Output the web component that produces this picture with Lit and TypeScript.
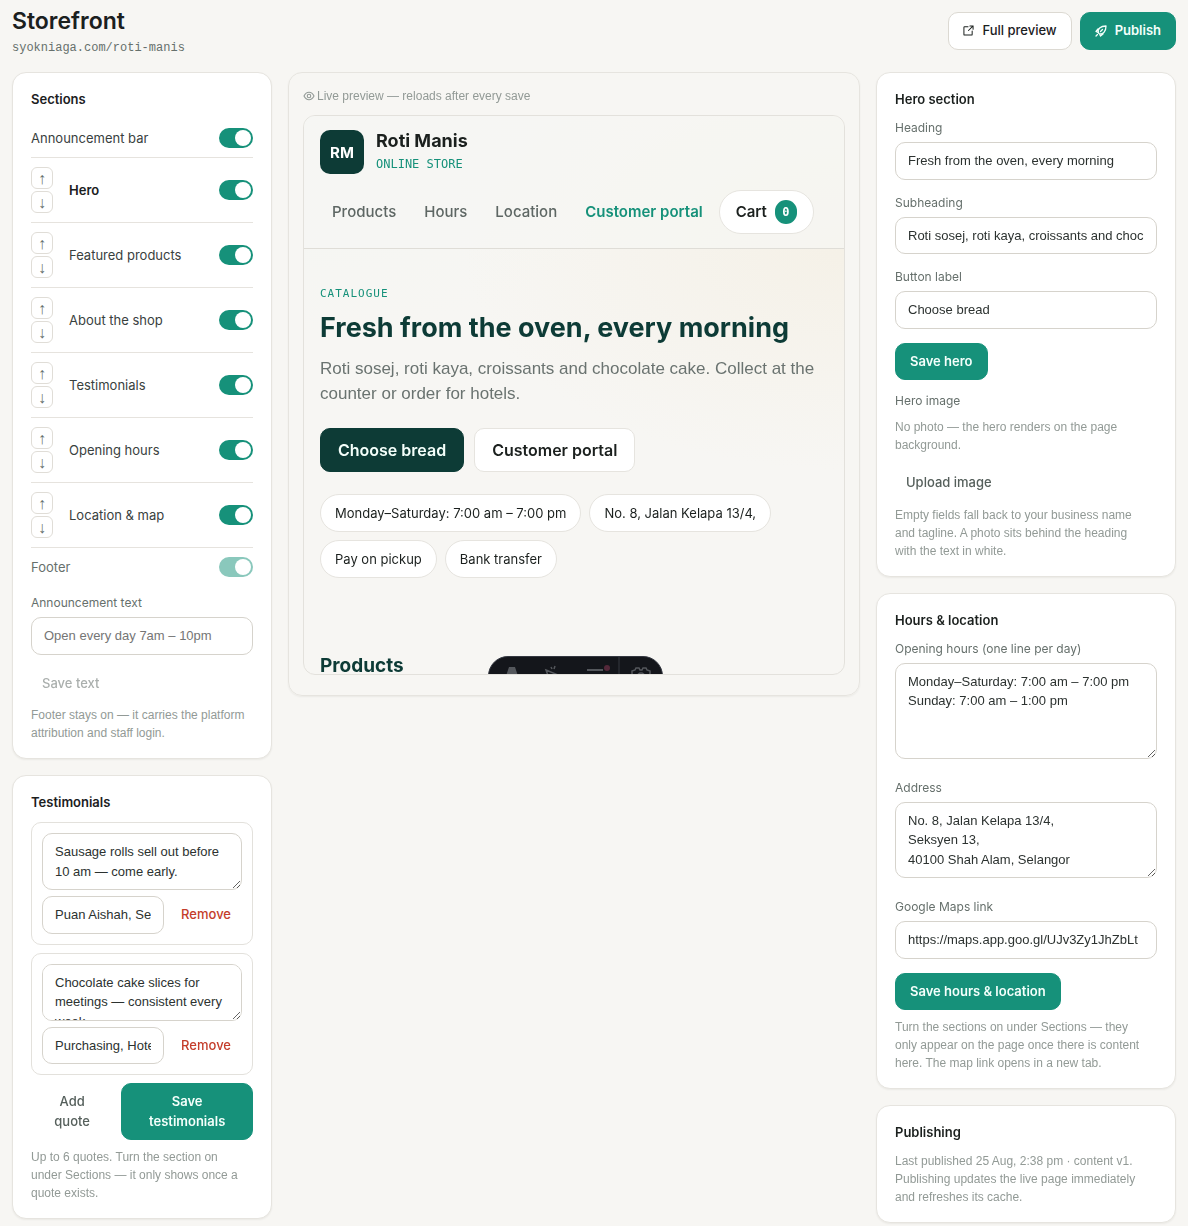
import { LitElement, html, css, svg, nothing } from "lit";
import { customElement, property, state } from "lit/decorators.js";
import { classMap } from "lit/directives/class-map.js";

const base = css`
  * { box-sizing: border-box; }
  h1, h2, h3, p { margin: 0; }
  button, input, textarea { font: inherit; }
`;

const controls = css`
  .card {
    background: #fff;
    border: 1px solid #e6e4df;
    border-radius: 14px;
    padding: 16px 18px;
    box-shadow: 0 1px 2px rgba(30, 30, 20, 0.06);
  }
  .title { font-size: 13px; line-height: 20px; font-weight: 600; color: #1b201e; margin-bottom: 10px; }
  .label { display: block; font-size: 12px; line-height: 18px; color: #66706c; margin-bottom: 5px; }
  .hint, .caption { font-family: "Liberation Sans", sans-serif; font-size: 12px; line-height: 18px; color: #929a96; }
  .hint { padding-right: 6px; }
  .field { margin-bottom: 14px; }
  .field.tall { margin-bottom: 20px; }
  .box {
    display: block;
    width: 100%;
    min-width: 0;
    padding: 8px 12px;
    border: 1px solid #d6d3cc;
    border-radius: 10px;
    background: #fff;
    color: #2c3230;
    font-family: "Liberation Sans", sans-serif;
    font-size: 13px;
    line-height: 1.5;
  }
  .box::placeholder { color: #757575; opacity: 1; }
  textarea.box { resize: vertical; }
  .btn {
    display: inline-flex;
    align-items: center;
    justify-content: center;
    gap: 8px;
    padding: 8px 14px;
    border: 1px solid transparent;
    border-radius: 10px;
    font-size: 13px;
    line-height: 1.5;
    font-weight: 500;
    background: none;
    color: #1b201e;
    cursor: pointer;
  }
  .primary { background: #16917a; border-color: #16917a; color: #f4fffb; font-weight: 600; }
  .outline { background: #fff; border-color: #dcd9d2; }
  .ghost { padding: 8px 10px; color: #56605c; }
  .danger { color: #c43d2b; }
  .ghost:disabled { opacity: 0.5; cursor: default; }
`;

const openIcon = svg`<svg width="11" height="11" viewBox="0 0 24 24" fill="none" stroke="currentColor" stroke-width="2.2" stroke-linecap="round" stroke-linejoin="round" aria-hidden="true"><path d="M15 2h7v7M22 2 12 12M11 4H3.500a1.500 1.500 0 0 0-1.500 1.500v15A1.500 1.500 0 0 0 3.500 22h15a1.500 1.500 0 0 0 1.500-1.500V13"/></svg>`;
const rocketIcon = svg`<svg width="12" height="12" viewBox="0 0 24 24" fill="none" stroke="currentColor" stroke-width="2.600" stroke-linecap="round" stroke-linejoin="round" aria-hidden="true"><path d="M7 16C4 8 11 2 22 2c0 11-6 18-14 15zM8 8H6l-4 5 4 2M16 16v2l-5 4-2-4M2 22l3-3"/><path d="M11 13l4-4"/></svg>`;
const eyeIcon = svg`<svg width="12" height="12" viewBox="0 0 24 24" fill="none" stroke="currentColor" stroke-width="2.2" stroke-linecap="round" stroke-linejoin="round" aria-hidden="true"><path d="M2 12c2.500-5 6-7.500 10-7.500S19.500 7 22 12c-2.500 5-6 7.500-10 7.500S4.500 17 2 12z"/><circle cx="12" cy="12" r="3.500"/></svg>`;

@customElement("section-row")
class SectionRow extends LitElement {
  static styles = [base, css`
    :host { display: block; }
    .row { display: flex; align-items: center; gap: 16px; padding: 9px 0; border-bottom: 1px solid #e6e3de; }
    .row.locked { border-bottom: 0; }
    .moves { display: grid; gap: 2px; }
    .move {
      width: 22px; height: 22px; padding: 0;
      border: 1px solid #e0ddd7; border-radius: 6px; background: #fff;
      color: #66706c; font-family: "Liberation Sans", sans-serif; font-size: 16px; line-height: 22px; cursor: pointer;
    }
    .name { flex: 1; font-size: 13px; line-height: 20px; color: #39413e; }
    .name.active { font-weight: 600; color: #1b201e; }
    .locked .name { color: #66706c; }
    .toggle {
      appearance: none; flex: none; display: flex; align-items: center;
      width: 34px; height: 20px; margin: 0; padding: 2px;
      border-radius: 10px; background: #c9cdca; cursor: pointer;
    }
    .toggle::before { content: ""; width: 16px; height: 16px; border-radius: 50%; background: #fff; }
    .toggle:checked { background: #16917a; justify-content: flex-end; }
    .toggle:disabled { opacity: 0.5; cursor: default; }
  `];
  @property() name = "";
  @property({ type: Boolean }) movable = false;
  @property({ type: Boolean }) active = false;
  @property({ type: Boolean }) locked = false;
  render() {
    return html`<div class=${classMap({ row: true, locked: this.locked })}>
      ${this.movable ? html`<div class="moves">
        <button class="move" aria-label="Move ${this.name} up">↑</button>
        <button class="move" aria-label="Move ${this.name} down">↓</button>
      </div>` : nothing}
      <label class=${classMap({ name: true, active: this.active })} for="toggle">${this.name}</label>
      <input class="toggle" id="toggle" type="checkbox" checked ?disabled=${this.locked} />
    </div>`;
  }
}

@customElement("shop-preview")
class ShopPreview extends LitElement {
  static styles = [base, css`
    :host { display: block; }
    .frame {
      position: relative; height: 560px; overflow: hidden;
      border: 1px solid #e3e1dc; border-radius: 12px;
      background:
        radial-gradient(380px 220px at 100% 24%, rgba(243, 236, 220, 0.5), transparent),
        radial-gradient(360px 220px at 0 0, rgba(242, 246, 242, 0.7), transparent),
        #f7f6f3;
    }
    .head { padding: 14px 16px; border-bottom: 1px solid #dfddd7; background: rgba(246, 246, 243, 0.7); }
    .brand { display: flex; align-items: center; gap: 12px; }
    .logo {
      display: grid; place-items: center; width: 44px; height: 44px;
      border-radius: 10px; background: #0d3b36; color: #fff; font-size: 15px; font-weight: 700;
    }
    .names { display: grid; gap: 2px; }
    .shop { font-size: 18px; line-height: 22px; font-weight: 700; color: #1b201e; }
    .kind, .eyebrow { font-family: "DejaVu Sans Mono", monospace; color: #16917a; }
    .kind { font-size: 12px; line-height: 20px; }
    .eyebrow { font-size: 11px; line-height: 18px; letter-spacing: 1px; }
    .nav { display: flex; align-items: center; gap: 4px; margin-top: 16px; font-size: 15px; line-height: 22px; }
    .nav a { padding: 0 12px; color: #5e6764; font-weight: 500; text-decoration: none; white-space: nowrap; }
    .nav .portal { color: #16917a; font-weight: 600; }
    .cart {
      display: flex; align-items: center; gap: 8px; height: 44px; padding: 0 16px;
      border: 1px solid #e6e4df; border-radius: 22px; background: #fff;
      color: #1b201e; font-weight: 600; cursor: pointer;
    }
    .count {
      display: grid; place-items: center; width: 22px; height: 24px; border-radius: 12px;
      background: #16917a; color: #fff; font-family: "DejaVu Sans Mono", monospace; font-size: 12px; font-weight: 700;
    }
    .hero { padding: 36px 16px 0; }
    .heading { margin-top: 8px; font-size: 27px; line-height: 34px; font-weight: 700; color: #0d3b36; }
    .lead { margin-top: 11px; font-family: "Liberation Sans", sans-serif; font-size: 17px; line-height: 25px; color: #6a7370; }
    .actions { display: flex; gap: 10px; margin-top: 22px; }
    .action {
      height: 44px; padding: 0 17px; border: 1px solid #e6e4df; border-radius: 10px;
      background: #fff; color: #1b201e; font-size: 16px; font-weight: 600; cursor: pointer;
    }
    .action.dark { background: #0d3b36; border-color: #0d3b36; color: #f4fffb; }
    .chips { display: flex; flex-wrap: wrap; gap: 8px; margin-top: 22px; }
    .chip {
      height: 38px; padding: 0 14px; border: 1px solid #e6e4df; border-radius: 19px;
      background: #fff; color: #1b201e; font-size: 13px; line-height: 36px;
    }
    .products { margin-top: 75px; font-size: 19px; line-height: 26px; font-weight: 700; color: #0d3b36; }
    .toolbar {
      position: absolute; top: 540px; left: 34%; width: 175px; height: 40px;
      border: 1px solid #343841; border-radius: 20px; background: #14161b; overflow: hidden;
    }
    .toolbar svg { display: block; }
  `];
  render() {
    return html`<div class="frame">
      <header class="head">
        <div class="brand">
          <div class="logo">RM</div>
          <div class="names"><div class="shop">Roti Manis</div><div class="kind">ONLINE STORE</div></div>
        </div>
        <nav class="nav">
          <a href="#products">Products</a><a href="#hours">Hours</a><a href="#location">Location</a>
          <a class="portal" href="#portal">Customer portal</a>
          <button class="cart">Cart <span class="count">0</span></button>
        </nav>
      </header>
      <section class="hero">
        <div class="eyebrow">CATALOGUE</div>
        <h2 class="heading">Fresh from the oven, every morning</h2>
        <p class="lead">Roti sosej, roti kaya, croissants and chocolate cake. Collect at the counter or order for hotels.</p>
        <div class="actions">
          <button class="action dark">Choose bread</button>
          <button class="action">Customer portal</button>
        </div>
        <div class="chips">
          <span class="chip">Monday–Saturday: 7:00 am – 7:00 pm</span>
          <span class="chip">No. 8, Jalan Kelapa 13/4,</span>
          <span class="chip">Pay on pickup</span>
          <span class="chip">Bank transfer</span>
        </div>
        <h3 class="products">Products</h3>
      </section>
      <div class="toolbar">
        <svg width="173" height="38" viewBox="0 0 173 38" fill="none" stroke="#54575c" stroke-width="1.500" aria-hidden="true">
          <path d="M20 10h6l6 18h-5l-1-7c-2-2-5-2-7 0l-1 7h-4z" fill="#54575c" stroke="none"/>
          <path d="M57 13l12 5-5 3-2 6zM62 10l1 2M66 9l-1 3"/>
          <path d="M98 13h16M98 19h16M98 25h16" stroke-width="2"/>
          <circle cx="118" cy="11" r="3" fill="#54283a" stroke="none"/>
          <path d="M130 0v38" stroke="#343841" stroke-width="1"/>
          <path d="M143 17v-3l3-1 1-2h3l1 2h2l1-2h3l1 2 3 1v3l-2 2v3l2 2v3l-4 2h-10l-4-2v-3l2-2v-3z"/>
          <circle cx="152" cy="20" r="4"/>
        </svg>
      </div>
    </div>`;
  }
}

interface Quote { text: string; author: string; }

@customElement("app-root")
class AppRoot extends LitElement {
  static styles = [base, controls, css`
    :host {
      display: block; min-height: 100vh; padding: 12px 12px 2px;
      background: #f7f6f3; color: #1b201e;
      font-family: Inter, "Liberation Sans", sans-serif;
    }
    .top { display: flex; justify-content: space-between; align-items: flex-start; margin-bottom: 14px; }
    .page { font-size: 23px; line-height: 18px; font-weight: 600; margin-bottom: 8px; }
    .url { font-family: "Liberation Mono", monospace; font-size: 12px; line-height: 20px; color: #66706c; }
    .tools { display: flex; gap: 8px; }
    .grid { display: grid; grid-template-columns: 260px minmax(0, 1fr) 300px; gap: 16px; align-items: start; }
    .col { display: grid; gap: 16px; min-width: 0; }
    .panel { border: 1px solid #e6e4df; border-radius: 14px; padding: 14px 14px 20px; box-shadow: 0 1px 2px rgba(30, 30, 20, 0.06); }
    .caption { display: flex; align-items: center; gap: 2px; margin-bottom: 10px; }
    .announce { margin: 8px 0 10px; }
    .photo { margin: 8px 0 10px; }
    .sub { margin: 12px 0 0; }
    .gap-s { margin-top: 4px; }
    .gap-m { margin-top: 8px; }
    .quote { display: grid; gap: 6px; padding: 10px; margin-bottom: 8px; border: 1px solid #e3e1dc; border-radius: 10px; }
    .person { display: flex; gap: 6px; }
    .person .box { flex: 1; width: 0; }
    .pair { display: grid; grid-template-columns: 5fr 8fr; gap: 8px; }
  `];

  @state() private quotes: Quote[] = [
    { text: "Sausage rolls sell out before 10 am — come early.", author: "Puan Aishah, Seksyen 13" },
    { text: "Chocolate cake slices for meetings — consistent every week.", author: "Purchasing, Hotel Seri" },
  ];

  private sections = ["Hero", "Featured products", "About the shop", "Testimonials", "Opening hours", "Location & map"];

  private remove(quote: Quote) {
    this.quotes = this.quotes.filter((q) => q !== quote);
  }

  private field(id: string, label: string, value: string) {
    return html`<div class="field"><label class="label" for=${id}>${label}</label><input class="box" id=${id} .value=${value} /></div>`;
  }

  private area(id: string, label: string, rows: number, value: string) {
    return html`<div class="field tall"><label class="label" for=${id}>${label}</label><textarea class="box" id=${id} rows=${rows} .value=${value}></textarea></div>`;
  }

  render() {
    return html`
      <header class="top">
        <div><h1 class="page">Storefront</h1><div class="url">syokniaga.com/roti-manis</div></div>
        <div class="tools">
          <button class="btn outline">${openIcon}Full preview</button>
          <button class="btn primary">${rocketIcon}Publish</button>
        </div>
      </header>
      <main class="grid">
        <div class="col">
          <section class="card">
            <h2 class="title">Sections</h2>
            <section-row name="Announcement bar"></section-row>
            ${this.sections.map((s, i) => html`<section-row name=${s} movable ?active=${i === 0}></section-row>`)}
            <section-row name="Footer" locked></section-row>
            <div class="announce">
              <label class="label" for="announce">Announcement text</label>
              <input class="box" id="announce" placeholder="Open every day 7am – 10pm" />
            </div>
            <button class="btn ghost" disabled>Save text</button>
            <p class="hint gap-s">Footer stays on — it carries the platform attribution and staff login.</p>
          </section>
          <section class="card">
            <h2 class="title">Testimonials</h2>
            ${this.quotes.map((q) => html`<div class="quote">
              <textarea class="box" rows="2" aria-label="Quote" .value=${q.text}></textarea>
              <div class="person">
                <input class="box" aria-label="Author" .value=${q.author} />
                <button class="btn ghost danger" @click=${() => this.remove(q)}>Remove</button>
              </div>
            </div>`)}
            <div class="pair">
              <button class="btn ghost">Add quote</button>
              <button class="btn primary">Save testimonials</button>
            </div>
            <p class="hint gap-m">Up to 6 quotes. Turn the section on under Sections — it only shows once a quote exists.</p>
          </section>
        </div>
        <section class="panel">
          <div class="caption">${eyeIcon}<span>Live preview — reloads after every save</span></div>
          <shop-preview></shop-preview>
        </section>
        <div class="col">
          <section class="card">
            <h2 class="title">Hero section</h2>
            ${this.field("heading", "Heading", "Fresh from the oven, every morning")}
            ${this.field("subheading", "Subheading", "Roti sosej, roti kaya, croissants and chocolate cake. Collect at the counter or order for hotels.")}
            ${this.field("cta", "Button label", "Choose bread")}
            <button class="btn primary">Save hero</button>
            <p class="label sub">Hero image</p>
            <p class="hint photo">No photo — the hero renders on the page background.</p>
            <button class="btn ghost">Upload image</button>
            <p class="hint gap-s">Empty fields fall back to your business name and tagline. A photo sits behind the heading with the text in white.</p>
          </section>
          <section class="card">
            <h2 class="title">Hours &amp; location</h2>
            ${this.area("hours", "Opening hours (one line per day)", 4, "Monday–Saturday: 7:00 am – 7:00 pm\nSunday: 7:00 am – 1:00 pm")}
            ${this.area("address", "Address", 3, "No. 8, Jalan Kelapa 13/4,\nSeksyen 13,\n40100 Shah Alam, Selangor")}
            ${this.field("maps", "Google Maps link", "https://maps.app.goo.gl/UJv3Zy1JhZbLt")}
            <button class="btn primary">Save hours &amp; location</button>
            <p class="hint gap-m">Turn the sections on under Sections — they only appear on the page once there is content here. The map link opens in a new tab.</p>
          </section>
          <section class="card">
            <h2 class="title">Publishing</h2>
            <p class="hint">Last published 25 Aug, 2:38 pm · content v1. Publishing updates the live page immediately and refreshes its cache.</p>
          </section>
        </div>
      </main>`;
  }
}
